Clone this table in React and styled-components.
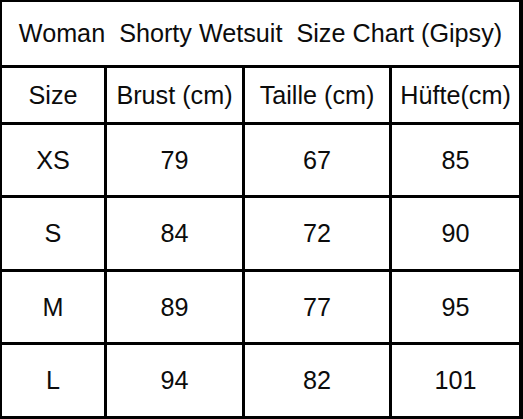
import styled, { createGlobalStyle } from "styled-components";

const GlobalStyle = createGlobalStyle`
  html, body {
    margin: 0;
    padding: 0;
    background: #fff;
  }
`;

const Chart = styled.div`
  display: grid;
  grid-template-columns: 102px 135px 144px 127px;
  grid-template-rows: 63px 54px 70px 71px 70px 71px;
  gap: 3px;
  padding: 2px 4px 3px 2px;
  width: 523px;
  height: 419px;
  box-sizing: border-box;
  background: #000;
  font-family: "Liberation Sans", Arial, sans-serif;
  font-size: 25.2px;
  color: #0c0c0c;
`;

const Cell = styled.div`
  display: flex;
  align-items: center;
  justify-content: center;
  background: #fff;
  white-space: pre;
  grid-column: ${(p) => (p.$span ? `span ${p.$span}` : "auto")};
`;

const headers = ["Size", "Brust (cm)", "Taille (cm)", "Hüfte(cm)"];

const rows = [
  ["XS", "79", "67", "85"],
  ["S", "84", "72", "90"],
  ["M", "89", "77", "95"],
  ["L", "94", "82", "101"],
];

export default function App() {
  return (
    <>
      <GlobalStyle />
      <Chart>
        <Cell $span={4}>Woman  Shorty Wetsuit  Size Chart (Gipsy)</Cell>
        {headers.map((h) => (
          <Cell key={h}>{h}</Cell>
        ))}
        {rows.map((row) =>
          row.map((value, i) => <Cell key={row[0] + i}>{value}</Cell>)
        )}
      </Chart>
    </>
  );
}
